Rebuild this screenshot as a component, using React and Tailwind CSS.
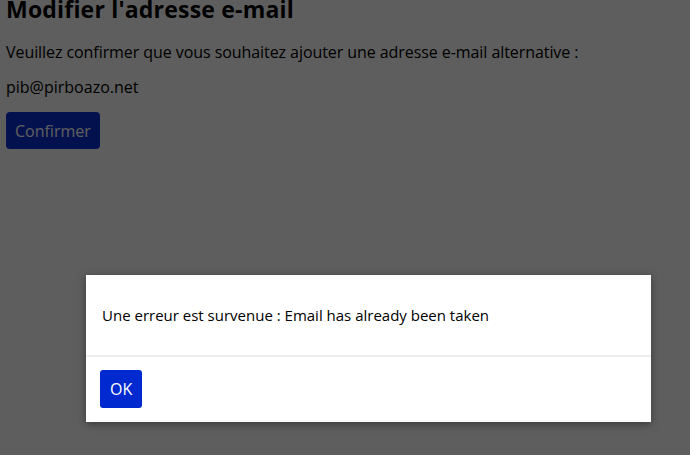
export default function App() {
  return (
    <div className="relative h-[455px] w-[690px] overflow-hidden bg-white text-black" style={{ fontFamily: '"Open Sans", "Noto Sans", sans-serif' }}>
      <div className="px-[6px]">
        <h1 className="-mt-[9px] text-[23px] font-bold leading-[36px] tracking-[0.2px]">
          Modifier l'adresse e-mail
        </h1>
        <p className="mt-[13px] text-[16px] leading-[24px] tracking-[-0.07px]">
          Veuillez confirmer que vous souhaitez ajouter une adresse e-mail alternative :
        </p>
        <p className="mt-[11px] text-[16px] leading-[24px]">pib@pirboazo.net</p>
        <button className="mt-[13px] h-[37px] rounded-[4px] bg-[#0a2fd6] px-[9px] text-[16px] text-white">
          Confirmer
        </button>
      </div>

      {/* overlay */}
      <div className="absolute inset-0 bg-black/[0.63]" />

      {/* modal */}
      <div className="absolute left-[86px] top-[275px] w-[565px] bg-white shadow-[0_2px_8px_rgba(0,0,0,0.4)]">
        <div className="flex h-[80px] items-center px-[16px] text-[15px]">
          Une erreur est survenue : Email has already been taken
        </div>
        <div className="h-[2px] bg-[#eeeeee]" />
        <div className="px-[14px] pb-[14px] pt-[13px]">
          <button className="h-[38px] rounded-[3px] bg-[#0029d0] px-[10px] text-[16px] text-white">OK</button>
        </div>
      </div>
    </div>
  );
}
